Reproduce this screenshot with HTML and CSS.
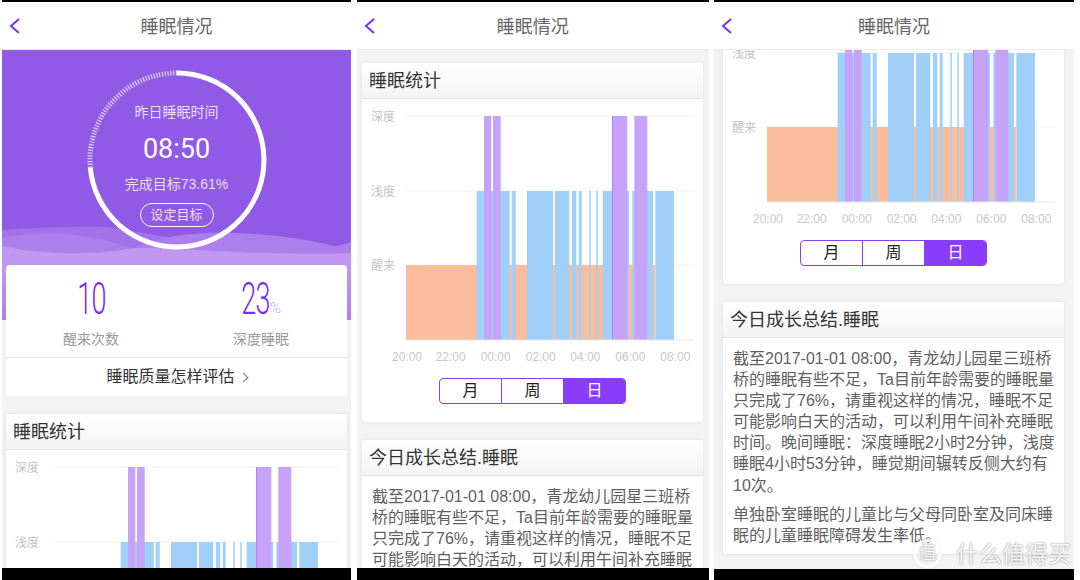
FILE: index.html
```html
<!DOCTYPE html>
<html lang="zh-CN">
<head>
    <meta charset="UTF-8">
    <meta name="viewport" content="width=device-width, initial-scale=1.0">
    <title>睡眠情况</title>
    <link rel="stylesheet" href="styles.css">
</head>
<body>

<!-- shared chart bars, used by all three screens -->
<svg class="defs" aria-hidden="true">
    <symbol id="bars" viewBox="0 0 341 270">
        <rect class="bar-awake" x="44" y="166" width="249" height="75"/>
        <g class="bar-light">
            <rect x="114.7" y="92" width="33" height="149"/>
            <rect x="149.7" y="92" width="4" height="149"/>
            <rect x="165" y="92" width="26" height="149"/>
            <rect x="193" y="92" width="14.3" height="149"/>
            <rect x="210" y="92" width="4.3" height="149"/>
            <rect x="216.7" y="92" width="3" height="149"/>
            <rect x="227.3" y="92" width="1.5" height="149"/>
            <rect x="234.3" y="92" width="1.5" height="149"/>
            <rect x="240.7" y="92" width="26.3" height="149"/>
            <rect x="270.3" y="92" width="20.7" height="149"/>
            <rect x="293.3" y="92" width="18.7" height="149"/>
        </g>
        <g class="bar-deep">
            <rect x="122" y="17" width="7.3" height="224"/>
            <rect x="131" y="17" width="7.7" height="224"/>
            <rect x="250" y="17" width="15.3" height="224"/>
            <rect x="272.3" y="17" width="13" height="224"/>
        </g>
        <rect class="bar-edge" x="250" y="17" width="1" height="224"/>
    </symbol>
    <symbol id="back" viewBox="0 0 11 16">
        <path d="M10 1 L2 8 L10 15" fill="none" stroke="#7b2ff0" stroke-width="2"/>
    </symbol>
</svg>

<div class="screens">

    <!-- screen 1 -->
    <div class="phone phone-a">
        <div class="nav">
            <svg class="back"><use href="#back"/></svg>
            <div class="nav-title">睡眠情况</div>
        </div>
        <div class="scroll">
            <div class="hero">
                <svg class="waves" viewBox="0 0 1048 135" preserveAspectRatio="none">
                    <path fill="#a273e8" d="M0 15 C150 5 290 3 330 8 C450 25 600 60 760 70 C850 72 950 72 1048 68 L1048 135 L0 135 Z"/>
                    <path fill="#ac7fec" d="M0 37 C80 25 150 25 200 27 C280 35 340 55 395 70 C430 55 450 50 465 45 C560 20 650 18 800 30 C900 40 960 55 1000 63 C1020 60 1040 55 1048 50 L1048 135 L0 135 Z"/>
                    <path fill="#c297f2" d="M0 63 C100 85 250 95 395 70 C500 65 700 90 1048 85 L1048 135 L0 135 Z"/>
                </svg>
                <div class="ring">
                    <svg class="ring-svg" viewBox="0 0 180 180">
                        <path class="ring-rest" d="M3.3 97.6 A87 87 0 0 1 90 3"/>
                        <path class="ring-done" d="M90 3 A87 87 0 1 1 3.3 97.6"/>
                    </svg>
                    <div class="ring-label">昨日睡眠时间</div>
                    <div class="ring-time">08:50</div>
                    <div class="ring-label ring-goal">完成目标73.61%</div>
                    <div class="goal-button">设定目标</div>
                </div>
            </div>
            <div class="panel-body">
                <div class="stats">
                    <div class="stat">
                        <div class="stat-num"><span class="digits">10</span></div>
                        <div class="stat-label">醒来次数</div>
                    </div>
                    <div class="stat">
                        <div class="stat-num"><span class="digits">23</span><span class="percent">%</span></div>
                        <div class="stat-label">深度睡眠</div>
                    </div>
                </div>
                <div class="quality-link">睡眠质量怎样评估<span class="chevron"></span></div>

                <div class="card card-first">
                    <div class="card-head">睡眠统计</div>
                    <svg class="chart" viewBox="0 0 341 270">
                        <line class="grid" x1="44" x2="332" y1="17" y2="17"/>
                        <line class="grid" x1="44" x2="332" y1="92" y2="92"/>
                        <line class="grid" x1="44" x2="332" y1="166" y2="166"/>
                        <use href="#bars"/>
                        <line class="axis" x1="44" x2="332" y1="241" y2="241"/>
                        <text class="y-label" x="9" y="21.500">深度</text>
                        <text class="y-label" x="9" y="96.500">浅度</text>
                    </svg>
                </div>
            </div>
        </div>
        <div class="foot"></div>
    </div>

    <!-- screen 2 -->
    <div class="phone phone-b">
        <div class="nav">
            <svg class="back"><use href="#back"/></svg>
            <div class="nav-title">睡眠情况</div>
        </div>
        <div class="scroll">
            <div class="panel-body panel-top">
                <div class="card">
                    <div class="card-head">睡眠统计</div>
                    <svg class="chart" viewBox="0 0 341 270">
                        <line class="grid" x1="44" x2="332" y1="17" y2="17"/>
                        <line class="grid" x1="44" x2="332" y1="92" y2="92"/>
                        <line class="grid" x1="44" x2="332" y1="166" y2="166"/>
                        <use href="#bars"/>
                        <line class="axis" x1="44" x2="332" y1="241" y2="241"/>
                        <text class="y-label" x="9" y="21.500">深度</text>
                        <text class="y-label" x="9" y="96.500">浅度</text>
                        <text class="y-label" x="9" y="170.500">醒来</text>
                        <text class="x-label" x="45" y="262">20:00</text>
                        <text class="x-label" x="88.700" y="262">22:00</text>
                        <text class="x-label" x="133.700" y="262">00:00</text>
                        <text class="x-label" x="178.700" y="262">02:00</text>
                        <text class="x-label" x="223.300" y="262">04:00</text>
                        <text class="x-label" x="268.300" y="262">06:00</text>
                        <text class="x-label" x="313.300" y="262">08:00</text>
                    </svg>
                    <div class="toggle">
                        <div class="toggle-item">月</div>
                        <div class="toggle-item">周</div>
                        <div class="toggle-item active">日</div>
                    </div>
                </div>
                <div class="card card-next">
                    <div class="card-head">今日成长总结.睡眠</div>
                    <div class="summary">
                        <p>截至2017-01-01 08:00，青龙幼儿园星三班桥<br>桥的睡眠有些不足，Ta目前年龄需要的睡眠量<br>只完成了76%，请重视这样的情况，睡眠不足<br>可能影响白天的活动，可以利用午间补充睡眠</p>
                    </div>
                </div>
            </div>
        </div>
        <div class="foot"></div>
    </div>

    <!-- screen 3, scrolled further down -->
    <div class="phone phone-c">
        <div class="nav">
            <svg class="back"><use href="#back"/></svg>
            <div class="nav-title">睡眠情况</div>
        </div>
        <div class="scroll">
            <div class="panel-body panel-top scrolled">
                <div class="card">
                    <div class="card-head">睡眠统计</div>
                    <svg class="chart" viewBox="0 0 341 270">
                        <line class="grid" x1="44" x2="332" y1="17" y2="17"/>
                        <line class="grid" x1="44" x2="332" y1="92" y2="92"/>
                        <line class="grid" x1="44" x2="332" y1="166" y2="166"/>
                        <use href="#bars"/>
                        <line class="axis" x1="44" x2="332" y1="241" y2="241"/>
                        <text class="y-label" x="9" y="96.500">浅度</text>
                        <text class="y-label" x="9" y="170.500">醒来</text>
                        <text class="x-label" x="45" y="262">20:00</text>
                        <text class="x-label" x="88.700" y="262">22:00</text>
                        <text class="x-label" x="133.700" y="262">00:00</text>
                        <text class="x-label" x="178.700" y="262">02:00</text>
                        <text class="x-label" x="223.300" y="262">04:00</text>
                        <text class="x-label" x="268.300" y="262">06:00</text>
                        <text class="x-label" x="313.300" y="262">08:00</text>
                    </svg>
                    <div class="toggle">
                        <div class="toggle-item">月</div>
                        <div class="toggle-item">周</div>
                        <div class="toggle-item active">日</div>
                    </div>
                </div>
                <div class="card card-next">
                    <div class="card-head">今日成长总结.睡眠</div>
                    <div class="summary">
                        <p>截至2017-01-01 08:00，青龙幼儿园星三班桥<br>桥的睡眠有些不足，Ta目前年龄需要的睡眠量<br>只完成了76%，请重视这样的情况，睡眠不足<br>可能影响白天的活动，可以利用午间补充睡眠<br>时间。晚间睡眠：深度睡眠2小时2分钟，浅度<br>睡眠4小时53分钟，睡觉期间辗转反侧大约有<br>10次。</p>
                        <p>单独卧室睡眠的儿童比与父母同卧室及同床睡<br>眠的儿童睡眠障碍发生率低。</p>
                    </div>
                </div>
            </div>
        </div>
        <div class="foot"></div>
    </div>
</div>

<div class="watermark">
    <span class="watermark-badge">值</span>
    <span>什么值得买</span>
</div>

</body>
</html>
```

FILE: styles.css
```css
* {
    margin: 0;
    padding: 0;
    box-sizing: border-box;
}

html, body {
    width: 1080px;
    height: 580px;
    overflow: hidden;
}

body {
    background: #ffffff;
    font-family: "Liberation Sans", "Noto Sans CJK SC", sans-serif;
    position: relative;
}

.defs {
    display: none;
}

.screens {
    display: flex;
    height: 580px;
    padding-left: 2px;
}

/* phones */
.phone {
    display: flex;
    flex-direction: column;
    height: 580px;
    flex-shrink: 0;
    border-top: 2px solid #000;
}

.phone-a {
    width: 349px;
    margin-right: 6px;
}

.phone-b {
    width: 351.5px;
    margin-right: 5.5px;
}

.phone-c {
    width: 360px;
}

.nav {
    height: 48px;
    padding-bottom: 1px;
    background: #ffffff;
    border-bottom: 1px solid #ececec;
    display: flex;
    align-items: center;
    justify-content: center;
    position: relative;
    z-index: 1;
    flex-shrink: 0;
}

.nav-title {
    font-size: 18px;
    color: #666;
}

.back {
    position: absolute;
    left: 7px;
    top: 16px;
    width: 11px;
    height: 16px;
}

.scroll {
    flex: 1;
    overflow: hidden;
    background: #f3f3f3;
}

.foot {
    height: 12px;
    background: #000;
    flex-shrink: 0;
}

.phone-c .foot {
    height: 11px;
}

/* hero */
.hero {
    height: 270px;
    background: linear-gradient(#9059e6 0, #9059e6 215px, #c297f2 215px, #b27eec 100%);
    position: relative;
    overflow: hidden;
    padding-top: 20px;
}

.waves {
    position: absolute;
    left: 0;
    top: 175px;
    width: 349px;
    height: 45px;
}

.ring {
    width: 180px;
    height: 180px;
    margin: 0 auto;
    position: relative;
    display: flex;
    flex-direction: column;
    align-items: center;
    padding-top: 32px;
}

.ring-svg {
    position: absolute;
    left: 0;
    top: 0;
    width: 180px;
    height: 180px;
}

.ring-done,
.ring-rest {
    fill: none;
    stroke: #fff;
    stroke-width: 5;
}

.ring-rest {
    stroke: rgba(255, 255, 255, 0.75);
    stroke-dasharray: 1.2 1.6;
}

.ring-label {
    font-size: 14px;
    line-height: 20px;
    color: #eadffb;
}

.ring-time {
    font-family: Roboto, sans-serif;
    font-size: 27px;
    line-height: 32px;
    color: #fff;
    margin-top: 11px;
}

.ring-goal {
    margin-top: 9px;
}

.goal-button {
    width: 74px;
    height: 24px;
    margin-top: 9px;
    border: 1px solid #fff;
    border-radius: 12px;
    font-size: 13px;
    line-height: 22px;
    color: #eadffb;
    text-align: center;
}

/* cards */
.panel-body {
    padding: 0 4px;
}

.panel-top {
    padding: 13px 0 0 5px;
}

.phone-c .panel-top {
    padding-left: 9px;
}

.scrolled {
    margin-top: -138px;
}

.stats {
    display: flex;
    margin-top: -55px;
    padding-right: 1px;
    position: relative;
    background: #fff;
    border-radius: 4px 4px 0 0;
    height: 92px;
}

.stat {
    flex: 1;
    display: flex;
    flex-direction: column;
    align-items: center;
}

.stat-num {
    height: 40px;
    margin-top: 14px;
    font-family: Roboto, sans-serif;
    font-weight: 300;
    font-size: 45px;
    line-height: 40px;
    color: #7b2ff0;
    white-space: nowrap;
    display: flex;
    align-items: flex-end;
}

.digits {
    width: 29px;
    transform: scaleX(0.6);
    letter-spacing: -1px;
    display: flex;
    justify-content: center;
}

.percent {
    font-size: 15px;
    line-height: 22px;
    color: #c6a2f8;
    font-weight: 300;
}

.stat-label {
    margin-top: 10px;
    font-size: 14px;
    line-height: 20px;
    color: #999;
}

.quality-link {
    height: 39px;
    background: #fff;
    border-top: 1px solid #e6e6e6;
    border-radius: 0 0 4px 4px;
    font-size: 16px;
    line-height: 38px;
    color: #333;
    text-align: center;
}

.chevron {
    display: inline-block;
    width: 7px;
    height: 7px;
    border-top: 1.5px solid #777;
    border-right: 1.5px solid #777;
    transform: rotate(45deg);
    margin-left: 5px;
    vertical-align: 1px;
}

.card {
    width: 341px;
    background: #fff;
    border-radius: 4px;
    box-shadow: 0 0 4px rgba(0, 0, 0, 0.08);
    padding-bottom: 18px;
}

.card-first {
    margin-top: 18px;
    padding-bottom: 0;
}

.card-next {
    margin-top: 18px;
    padding-bottom: 8px;
}

.card-head {
    height: 36px;
    padding-left: 7px;
    font-size: 18px;
    line-height: 36px;
    color: #333;
    background: linear-gradient(#ffffff, #f4f4f4);
    border-bottom: 1px solid #e4e4e4;
    border-radius: 4px 4px 0 0;
}

/* chart */
.chart {
    display: block;
    width: 341px;
    height: 270px;
}

.grid {
    stroke: #f2f2f2;
    stroke-width: 1;
}

.axis {
    stroke: #e6e6e6;
    stroke-width: 1;
}

.bar-awake {
    fill: #fbbc9c;
}

.bar-light {
    fill: #a0cffa;
}

.bar-deep {
    fill: #c6a2f8;
}

.bar-edge {
    fill: #b57ff5;
}

.y-label {
    font-size: 12px;
    fill: #c4c4c4;
}

.x-label {
    font-size: 12px;
    fill: #c8c8c8;
    text-anchor: middle;
}

.toggle {
    display: flex;
    width: 187px;
    height: 26px;
    margin: 9px auto 0;
    border: 1px solid #8a3dfb;
    border-radius: 4px;
    overflow: hidden;
}

.toggle-item {
    flex: 1;
    font-size: 16px;
    line-height: 24px;
    text-align: center;
    color: #222;
    border-right: 1px solid #8a3dfb;
}

.toggle-item.active {
    background: #8a3dfb;
    color: #fff;
    border-right: none;
}

.summary {
    padding: 10px 10px 0;
    font-size: 16px;
    line-height: 21.1px;
    color: #5f5f5f;
    white-space: nowrap;
}

.summary p + p {
    margin-top: 8px;
}

/* watermark over the corner */
.watermark {
    position: absolute;
    left: 913px;
    top: 539px;
    display: flex;
    align-items: center;
    gap: 14px;
    font-size: 23px;
    line-height: 28px;
    color: rgba(255, 255, 255, 0.92);
    text-shadow: 0 0 2px #777;
}

.watermark-badge {
    width: 29px;
    height: 29px;
    border: 3px solid rgba(255, 255, 255, 0.85);
    border-radius: 50%;
    font-size: 18px;
    line-height: 23px;
    text-align: center;
    box-shadow: 0 0 1px #bbb;
}
```
